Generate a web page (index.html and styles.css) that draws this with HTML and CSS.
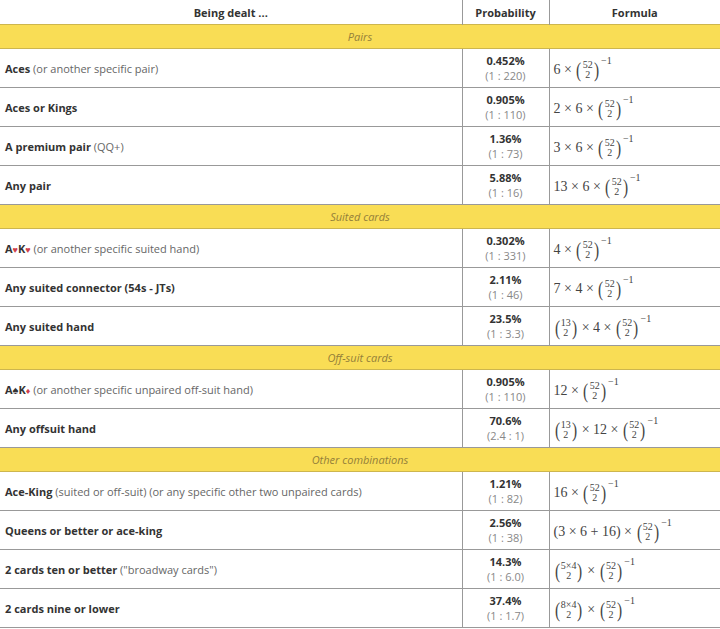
FILE: index.html
```html
<!DOCTYPE html>
<html>
<head>
<meta charset="utf-8">
<link rel="stylesheet" href="styles.css">
</head>
<body>
<table class="odds">
  <colgroup><col class="c1"><col class="c2"><col class="c3"></colgroup>
  <thead>
    <tr class="head"><th>Being dealt ...</th><th>Probability</th><th>Formula</th></tr>
  </thead>
  <tbody>
    <tr class="band"><td colspan="3">Pairs</td></tr>
    <tr class="row">
      <td class="hand"><b>Aces</b> (or another specific pair)</td>
      <td class="prob"><b>0.452%</b><span>(1 : 220)</span></td>
      <td class="fx">6 × <span class="bn"><span class="pl">(</span><span class="st"><i>52</i><i>2</i></span><span class="pl">)</span></span><sup>−1</sup></td>
    </tr>
    <tr class="row">
      <td class="hand"><b>Aces or Kings</b></td>
      <td class="prob"><b>0.905%</b><span>(1 : 110)</span></td>
      <td class="fx">2 × 6 × <span class="bn"><span class="pl">(</span><span class="st"><i>52</i><i>2</i></span><span class="pl">)</span></span><sup>−1</sup></td>
    </tr>
    <tr class="row">
      <td class="hand"><b>A premium pair</b> (QQ+)</td>
      <td class="prob"><b>1.36%</b><span>(1 : 73)</span></td>
      <td class="fx">3 × 6 × <span class="bn"><span class="pl">(</span><span class="st"><i>52</i><i>2</i></span><span class="pl">)</span></span><sup>−1</sup></td>
    </tr>
    <tr class="row">
      <td class="hand"><b>Any pair</b></td>
      <td class="prob"><b>5.88%</b><span>(1 : 16)</span></td>
      <td class="fx">13 × 6 × <span class="bn"><span class="pl">(</span><span class="st"><i>52</i><i>2</i></span><span class="pl">)</span></span><sup>−1</sup></td>
    </tr>
    <tr class="band"><td colspan="3">Suited cards</td></tr>
    <tr class="row">
      <td class="hand"><b>A<span class="red">♥</span>K<span class="red">♥</span></b> (or another specific suited hand)</td>
      <td class="prob"><b>0.302%</b><span>(1 : 331)</span></td>
      <td class="fx">4 × <span class="bn"><span class="pl">(</span><span class="st"><i>52</i><i>2</i></span><span class="pl">)</span></span><sup>−1</sup></td>
    </tr>
    <tr class="row">
      <td class="hand"><b>Any suited connector (54s - JTs)</b></td>
      <td class="prob"><b>2.11%</b><span>(1 : 46)</span></td>
      <td class="fx">7 × 4 × <span class="bn"><span class="pl">(</span><span class="st"><i>52</i><i>2</i></span><span class="pl">)</span></span><sup>−1</sup></td>
    </tr>
    <tr class="row">
      <td class="hand"><b>Any suited hand</b></td>
      <td class="prob"><b>23.5%</b><span>(1 : 3.3)</span></td>
      <td class="fx"><span class="bn"><span class="pl">(</span><span class="st"><i>13</i><i>2</i></span><span class="pl">)</span></span> × 4 × <span class="bn"><span class="pl">(</span><span class="st"><i>52</i><i>2</i></span><span class="pl">)</span></span><sup>−1</sup></td>
    </tr>
    <tr class="band"><td colspan="3">Off-suit cards</td></tr>
    <tr class="row">
      <td class="hand"><b>A♠K<span class="red">♦</span></b> (or another specific unpaired off-suit hand)</td>
      <td class="prob"><b>0.905%</b><span>(1 : 110)</span></td>
      <td class="fx">12 × <span class="bn"><span class="pl">(</span><span class="st"><i>52</i><i>2</i></span><span class="pl">)</span></span><sup>−1</sup></td>
    </tr>
    <tr class="row">
      <td class="hand"><b>Any offsuit hand</b></td>
      <td class="prob"><b>70.6%</b><span>(2.4 : 1)</span></td>
      <td class="fx"><span class="bn"><span class="pl">(</span><span class="st"><i>13</i><i>2</i></span><span class="pl">)</span></span> × 12 × <span class="bn"><span class="pl">(</span><span class="st"><i>52</i><i>2</i></span><span class="pl">)</span></span><sup>−1</sup></td>
    </tr>
    <tr class="band"><td colspan="3">Other combinations</td></tr>
    <tr class="row">
      <td class="hand"><b>Ace-King</b> (suited or off-suit) (or any specific other two unpaired cards)</td>
      <td class="prob"><b>1.21%</b><span>(1 : 82)</span></td>
      <td class="fx">16 × <span class="bn"><span class="pl">(</span><span class="st"><i>52</i><i>2</i></span><span class="pl">)</span></span><sup>−1</sup></td>
    </tr>
    <tr class="row">
      <td class="hand"><b>Queens or better or ace-king</b></td>
      <td class="prob"><b>2.56%</b><span>(1 : 38)</span></td>
      <td class="fx">(3 × 6 + 16) × <span class="bn"><span class="pl">(</span><span class="st"><i>52</i><i>2</i></span><span class="pl">)</span></span><sup>−1</sup></td>
    </tr>
    <tr class="row">
      <td class="hand"><b>2 cards ten or better</b> ("broadway cards")</td>
      <td class="prob"><b>14.3%</b><span>(1 : 6.0)</span></td>
      <td class="fx"><span class="bn"><span class="pl">(</span><span class="st"><i>5×4</i><i>2</i></span><span class="pl">)</span></span> × <span class="bn"><span class="pl">(</span><span class="st"><i>52</i><i>2</i></span><span class="pl">)</span></span><sup>−1</sup></td>
    </tr>
    <tr class="row">
      <td class="hand"><b>2 cards nine or lower</b></td>
      <td class="prob"><b>37.4%</b><span>(1 : 1.7)</span></td>
      <td class="fx"><span class="bn"><span class="pl">(</span><span class="st"><i>8×4</i><i>2</i></span><span class="pl">)</span></span> × <span class="bn"><span class="pl">(</span><span class="st"><i>52</i><i>2</i></span><span class="pl">)</span></span><sup>−1</sup></td>
    </tr>
  </tbody>
</table>
</body>
</html>
```
FILE: styles.css
```css
html, body {
  margin: 0;
  padding: 0;
  background: #fff;
}
body {
  font-family: "Open Sans", "Liberation Sans", sans-serif;
  font-size: 11px;
  color: #555;
}
.odds {
  width: 720px;
  border-collapse: collapse;
  table-layout: fixed;
}
.c1 { width: 462px; }
.c2 { width: 87px; }
.c3 { width: 171px; }

.odds th {
  height: 24px;
  padding: 0;
  font-weight: bold;
  color: #333;
  text-align: center;
  vertical-align: middle;
  border-left: 1px solid #999;
}
.odds th:first-child { border-left: none; }

.band td {
  height: 23px;
  padding: 0;
  background: #f9dd55;
  border-top: 1px solid #cdb64e;
  border-bottom: 1px solid #cdb64e;
  text-align: center;
  font-style: italic;
  color: #94803a;
}

.row td {
  height: 38px;
  padding: 0;
  border-bottom: 1px solid #999;
  vertical-align: middle;
}
.row td + td { border-left: 1px solid #999; }

.hand {
  padding-left: 5px !important;
  color: #666;
}
.hand b { color: #333; }
.red { color: #d0404a; font-size: 9px; }

.prob {
  text-align: center;
  line-height: 15px;
}
.prob b {
  display: block;
  color: #333;
}
.prob span {
  display: block;
  color: #888;
}

.fx {
  padding-left: 4px !important;
  font-family: "Liberation Serif", "DejaVu Serif", serif;
  font-size: 14px;
  color: #444;
  white-space: nowrap;
}
.bn {
  display: inline-flex;
  align-items: center;
  vertical-align: middle;
  margin-top: -2px;
}
.pl {
  font-size: 22px;
  line-height: 1;
  transform: scaleX(0.7);
}
.st {
  display: inline-flex;
  flex-direction: column;
  align-items: center;
  font-size: 10px;
  line-height: 10px;
}
.st i { font-style: normal; }
.fx sup {
  font-size: 10px;
  vertical-align: 10px;
  margin-left: 1px;
}
```
